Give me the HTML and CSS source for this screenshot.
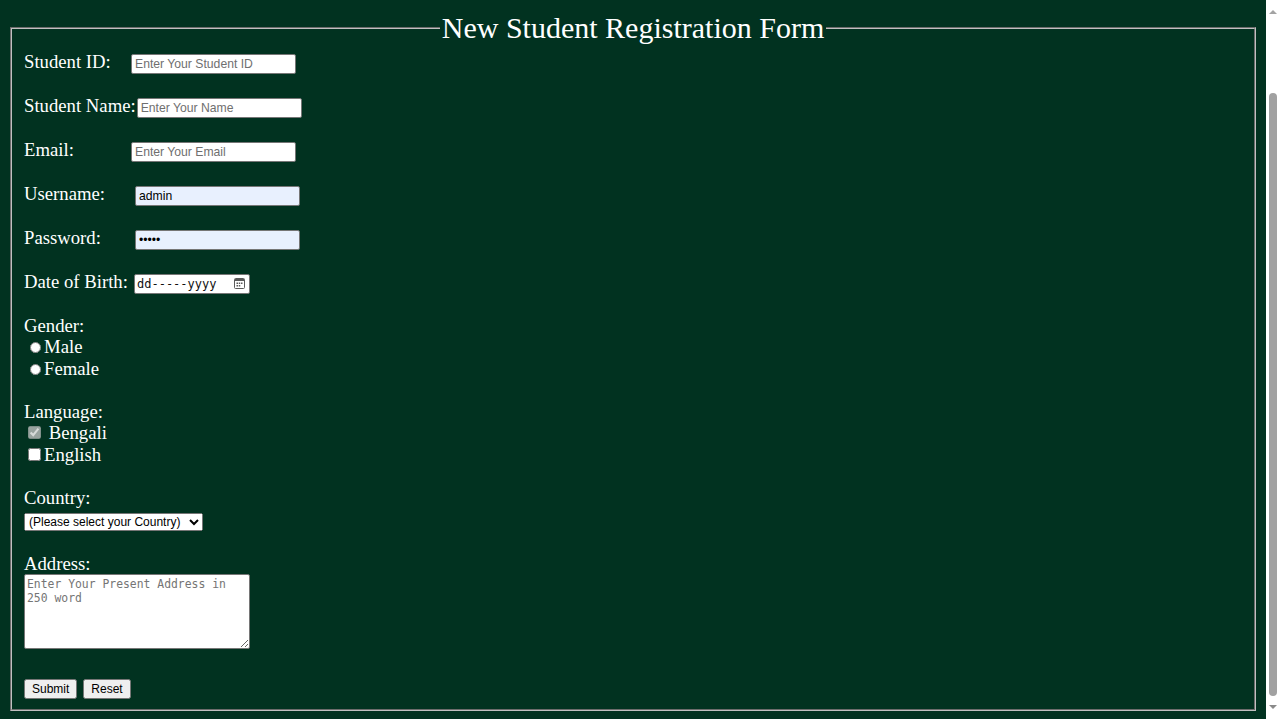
FILE: index.html
```html
<!DOCTYPE html>
<html lang="en">
<head>
<meta charset="utf-8">
<title>New Student Registration Form</title>
<link rel="stylesheet" href="styles.css">
</head>
<body>
<div class="page-top"></div>
<form class="reg-form" action="#">
  <fieldset class="frame">
    <legend class="frame-title">New Student Registration Form</legend>
    <div class="fields">
      <div class="row"><label class="lbl w107" for="sid">Student ID:</label><input class="txt" id="sid" type="text" placeholder="Enter Your Student ID"></div>
      <div class="row"><label class="lbl name" for="sname">Student Name:</label><input class="txt" id="sname" type="text" placeholder="Enter Your Name"></div>
      <div class="row"><label class="lbl w107" for="email">Email:</label><input class="txt" id="email" type="email" placeholder="Enter Your Email"></div>
      <div class="row"><label class="lbl w111" for="uname">Username:</label><input class="txt filled" id="uname" type="text" value="admin"></div>
      <div class="row"><label class="lbl w111" for="pass">Password:</label><input class="txt filled" id="pass" type="password" value="admin"></div>
      <div class="row"><label class="lbl w110" for="dob">Date of Birth:</label><div class="date" id="dob" role="textbox" aria-label="Date of Birth"><span class="date-text">dd-----yyyy</span><svg class="date-icon" width="11" height="11" viewBox="0 0 11 11" aria-hidden="true"><rect x="0.5" y="0.5" width="10" height="10" rx="1" fill="none" stroke="#5a5a5a"/><rect x="1" y="1" width="9" height="2" fill="#5a5a5a"/><rect x="2.5" y="4.5" width="1.5" height="1.5" fill="#5a5a5a"/><rect x="4.75" y="4.5" width="1.5" height="1.5" fill="#5a5a5a"/><rect x="7" y="4.5" width="1.5" height="1.5" fill="#5a5a5a"/><rect x="2.5" y="7" width="1.5" height="1.5" fill="#5a5a5a"/><rect x="4.75" y="7" width="1.5" height="1.5" fill="#5a5a5a"/></svg></div></div>
      <div class="group">
        <span class="group-title">Gender:</span>
        <label class="opt"><input class="radio" type="radio" name="gender" value="male">Male</label>
        <label class="opt"><input class="radio" type="radio" name="gender" value="female">Female</label>
      </div>
      <div class="group">
        <span class="group-title">Language:</span>
        <label class="opt"><input type="checkbox" checked disabled> Bengali</label>
        <label class="opt"><input type="checkbox">English</label>
      </div>
      <div class="group">
        <label class="group-title" for="country">Country:</label>
        <select class="sel" id="country">
          <option>(Please select your Country)</option>
          <option>Bangladesh</option>
          <option>India</option>
        </select>
      </div>
      <div class="group">
        <label class="group-title" for="addr">Address:</label>
        <textarea class="addr" id="addr" placeholder="Enter Your Present Address in 250 word"></textarea>
      </div>
      <div class="actions">
        <button class="btn" type="submit">Submit</button>
        <button class="btn" type="reset">Reset</button>
      </div>
    </div>
  </fieldset>
</form>
<div class="scrollbar" aria-hidden="true"><span class="sb-arrow sb-up"></span><span class="sb-thumb"></span><span class="sb-arrow sb-down"></span></div>
<script src="script.js"></script>
</body>
</html>
```
FILE: styles.css
```css
html {
  background: #013220;
  padding-right: 14px;
}
body {
  margin: 8px;
  background: #013220;
  color: #ffffff;
  font-family: "Liberation Serif", "Times New Roman", serif;
  font-size: 16px;
}
.page-top {
  height: 100px;
}
.reg-form {
  margin: 0;
}
.frame {
  margin: 0 2px;
  padding: 0.35em 0.75em 0.625em;
  border: 2px groove #c0c0c0;
}
.frame-title {
  margin: 0 auto;
  padding: 0 2px;
  font-size: 30px;
  color: #ffffff;
}
.fields {
  display: flex;
  flex-direction: column;
  gap: 21.5px;
  font-size: 18.72px;
  line-height: 21.5px;
}
.row {
  display: flex;
  align-items: baseline;
  height: 22.5px;
}
.lbl {
  flex: none;
}
.w107 { width: 107px; }
.w110 { width: 110px; }
.w111 { width: 111px; }
.name { margin-right: 1px; }
.txt {
  box-sizing: border-box;
  width: 165px;
  height: 20px;
  margin: 0;
  padding: 1px 3px;
  border: 1px solid #767676;
  border-radius: 2px;
  background: #ffffff;
  color: #000000;
  font: 12.2px "Liberation Sans", Arial, sans-serif;
}
.txt::placeholder {
  color: #6f6f6f;
}
.txt.filled {
  background: #e8f0fe;
}
.date {
  box-sizing: border-box;
  display: inline-flex;
  align-items: center;
  justify-content: space-between;
  width: 116px;
  height: 20px;
  padding: 0 4px 0 2px;
  border: 1px solid #767676;
  border-radius: 2px;
  background: #ffffff;
}
.date-text {
  color: #111111;
  font: 12px "DejaVu Sans Mono", "Liberation Mono", monospace;
}
.date-icon {
  display: block;
}
.group {
  display: flex;
  flex-direction: column;
}
.group-title {
  display: block;
  height: 21.5px;
}
.opt {
  display: block;
  height: 21.5px;
}
.radio {
  width: 11px;
  height: 11px;
  margin: 3px 3px 0 6px;
}
.sel {
  display: block;
  align-self: flex-start;
  width: 179px;
  height: 18px;
  margin: 5px 0 0;
  font: 12px "Liberation Sans", Arial, sans-serif;
}
.addr {
  display: block;
  box-sizing: border-box;
  width: 226px;
  height: 75px;
  margin: 0;
  padding: 2px;
  border: 1px solid #767676;
  border-radius: 2px;
  font: 11.4px/14px "DejaVu Sans Mono", "Liberation Mono", monospace;
}
.addr::placeholder {
  color: #757575;
}
.actions {
  display: flex;
  gap: 6px;
  margin-top: 8.5px;
}
.btn {
  margin: 0;
  padding: 1px 6px;
  font: 12px "Liberation Sans", Arial, sans-serif;
}
.scrollbar {
  position: fixed;
  top: 0;
  right: 0;
  width: 14px;
  height: 100%;
  background: #ffffff;
  display: flex;
  flex-direction: column;
  align-items: center;
}
.sb-arrow {
  width: 0;
  height: 0;
  border-left: 4px solid transparent;
  border-right: 4px solid transparent;
}
.sb-up {
  margin-top: 10px;
  border-bottom: 4px solid #a3a3a3;
}
.sb-thumb {
  flex: 1;
  width: 8px;
  margin: 79px 0 9px;
  border-radius: 4px;
  background: #a1a1a1;
}
.sb-down {
  margin-bottom: 10px;
  border-top: 4px solid #8a8a8a;
}
```
FILE: script.js
```js
function scrollToEnd() {
  window.scrollTo(0, document.documentElement.scrollHeight);
}
scrollToEnd();
window.addEventListener('load', scrollToEnd);
```
